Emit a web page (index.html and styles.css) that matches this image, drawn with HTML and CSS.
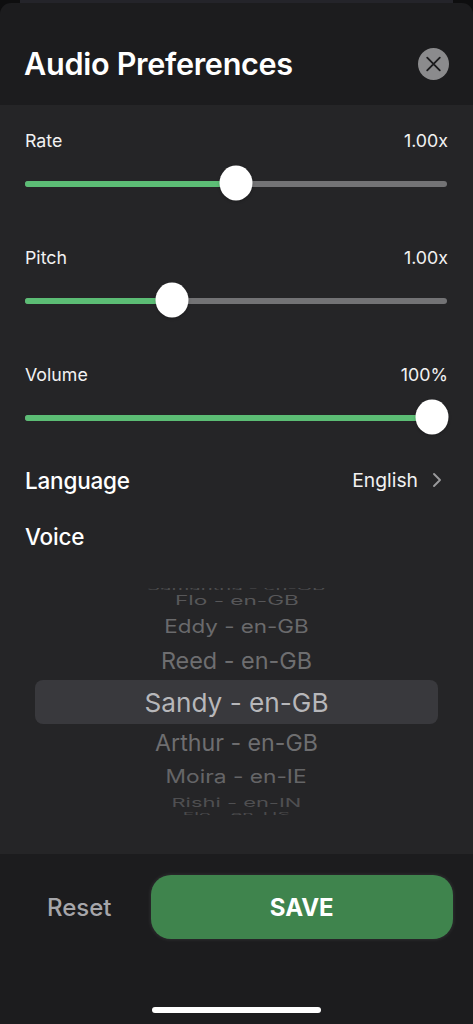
FILE: index.html
```html
<!DOCTYPE html>
<html lang="en">
<head>
<meta charset="utf-8">
<title>Audio Preferences</title>
<link rel="stylesheet" href="styles.css">
</head>
<body>
<div class="backdrop-card"></div>
<main class="sheet">
  <header class="sheet-header">
    <h1 class="title">Audio Preferences</h1>
    <button class="close" aria-label="Close">
      <svg viewBox="0 0 32 32" width="32" height="32"><path d="M9.5 9.5 22.5 22.5M22.5 9.5 9.5 22.5" fill="none" stroke="#1c1c1e" stroke-width="1.9" stroke-linecap="round"/></svg>
    </button>
  </header>
  <section class="content">
    <div class="slider-block">
      <div class="slider-labels"><span>Rate</span><span>1.00x</span></div>
      <div class="slider"><div class="fill" style="width:49.9%"></div><div class="thumb" style="left:49.9%"></div></div>
    </div>
    <div class="slider-block">
      <div class="slider-labels"><span>Pitch</span><span>1.00x</span></div>
      <div class="slider"><div class="fill" style="width:34.8%"></div><div class="thumb" style="left:34.8%"></div></div>
    </div>
    <div class="slider-block">
      <div class="slider-labels"><span>Volume</span><span>100%</span></div>
      <div class="slider"><div class="fill" style="width:96.4%"></div><div class="thumb" style="left:96.4%"></div></div>
    </div>
    <div class="row language">
      <span class="row-title">Language</span>
      <span class="row-value">English
        <svg class="chevron" viewBox="0 0 10 16" width="10" height="16"><path d="M2 2 8 8 2 14" fill="none" stroke="#9a9a9c" stroke-width="1.9" stroke-linecap="round" stroke-linejoin="round"/></svg>
      </span>
    </div>
    <div class="row voice"><span class="row-title">Voice</span></div>
    <div class="picker">
      <div class="picker-band"></div>
      <div class="item i0">Samantha - en-GB</div>
      <div class="item i1">Flo - en-GB</div>
      <div class="item i2">Eddy - en-GB</div>
      <div class="item i3">Reed - en-GB</div>
      <div class="item i4">Sandy - en-GB</div>
      <div class="item i5">Arthur - en-GB</div>
      <div class="item i6">Moira - en-IE</div>
      <div class="item i7">Rishi - en-IN</div>
      <div class="item i8">Flo - en-US</div>
    </div>
  </section>
  <footer class="footer">
    <div class="actions">
      <button class="reset">Reset</button>
      <button class="save">SAVE</button>
    </div>
    <div class="home-bar"></div>
  </footer>
</main>
</body>
</html>
```
FILE: styles.css
```css
* { box-sizing: border-box; }
html, body { margin: 0; padding: 0; }
body {
  width: 473px;
  height: 1024px;
  overflow: hidden;
  background: #0e0e0f;
  font-family: Inter, "Liberation Sans", sans-serif;
  color: #fff;
  position: relative;
}
.backdrop-card {
  position: absolute;
  top: 0;
  left: 20px;
  right: 20px;
  height: 10px;
  background: #24242a;
}
.sheet {
  position: absolute;
  top: 3px;
  left: 0;
  right: 0;
  bottom: 0;
  display: flex;
  flex-direction: column;
  border-radius: 11px 11px 0 0;
  overflow: hidden;
}
.sheet-header {
  height: 102px;
  flex: none;
  background: #1c1c1e;
  display: flex;
  align-items: center;
  justify-content: space-between;
  padding: 20px 24px 0;
}
.title {
  margin: -2px 0 0;
  font-size: 30.6px;
  font-weight: 600;
  letter-spacing: -0.3px;
}
.close {
  width: 31px;
  height: 32px;
  padding: 0;
  border: 0;
  border-radius: 50%;
  background: #8b8b8d;
  display: flex;
  align-items: center;
  justify-content: center;
}
.content {
  flex: none;
  height: 749px;
  background: #252527;
  padding: 25px 26px 0 25px;
}
.slider-block { height: 117px; }
.slider-labels {
  display: flex;
  justify-content: space-between;
  margin-right: -1px;
  font-size: 17.8px;
  line-height: 22px;
  color: #f2f2f2;
}
.slider {
  position: relative;
  height: 6px;
  margin-top: 29px;
  border-radius: 3px;
  background: #737375;
}
.fill {
  height: 100%;
  border-radius: 3px;
  background: #5cbd75;
}
.thumb {
  position: absolute;
  top: calc(50% - 1px);
  width: 33px;
  height: 35px;
  border-radius: 50%;
  background: #fff;
  transform: translate(-50%, -50%);
  box-shadow: 0 1px 3px rgba(0, 0, 0, 0.25);
}
.row {
  display: flex;
  justify-content: space-between;
  align-items: center;
}
.language { margin-top: -15px; height: 28px; }
.voice { margin-top: 28px; height: 28px; }
.row-title { font-size: 22.5px; font-weight: 500; letter-spacing: -0.2px; }
.row-value {
  display: flex;
  align-items: center;
  gap: 14px;
  font-size: 19.3px;
  color: #f2f2f2;
  padding-right: 5px;
}
.picker {
  position: relative;
  margin: 38px 9px 0 10px;
  height: 227px;
  overflow: hidden;
  display: flex;
  flex-direction: column;
  align-items: center;
  color: #6e6e70;
}
.picker-band {
  position: absolute;
  top: 92px;
  left: 0;
  right: 0;
  height: 44px;
  border-radius: 8px;
  background: #39393d;
}
.item {
  position: relative;
  white-space: nowrap;
  flex: none;
}
.i0 { height: 10px; line-height: 10px; font-size: 16px; transform: scale(1.27, 0.4); color: #4d4d4f; margin-top: -5px; }
.i1 { height: 18px; line-height: 18px; font-size: 16px; transform: scale(1.41, 0.8); color: #575759; margin-top: -2px; }
.i2 { height: 24px; line-height: 24px; font-size: 20px; margin-top: 6px; transform: scale(1.12, 0.92); color: #6a6a6c; }
.i3 { height: 26px; line-height: 26px; font-size: 23.4px; margin-top: 9px; color: #6e6e70; }
.i4 { height: 30px; line-height: 30px; font-size: 26.2px; margin-top: 14px; color: #b7b7ba; }
.i5 { height: 26px; line-height: 26px; font-size: 23.2px; margin-top: 12px; color: #6e6e70; }
.i6 { height: 24px; line-height: 24px; font-size: 20px; margin-top: 9px; transform: scale(1.135, 0.92); color: #656567; }
.i7 { height: 16px; line-height: 16px; font-size: 16px; margin-top: 5px; transform: scale(1.37, 0.75); color: #4f4f51; }
.i8 { height: 8px; line-height: 8px; font-size: 14px; margin-top: 1px; transform: scale(1.4, 0.4); color: #4a4a4c; }
.footer {
  flex: 1;
  background: #1c1c1e;
  position: relative;
}
.actions {
  display: flex;
  align-items: center;
  padding: 21px 20px 0 47px;
  gap: 39px;
}
.reset {
  padding: 0;
  border: 0;
  background: none;
  color: #a6a6aa;
  font: 500 24px Inter, "Liberation Sans", sans-serif;
}
.save {
  flex: 1;
  height: 64px;
  border: 0;
  border-radius: 20px;
  background: #3f844d;
  color: #fff;
  font: 700 24px Inter, "Liberation Sans", sans-serif;
  box-shadow: 0 0 4px rgba(255, 255, 255, 0.12);
}
.home-bar {
  position: absolute;
  bottom: 11px;
  left: 152px;
  width: 169px;
  height: 6px;
  border-radius: 3px;
  background: #fff;
}
```
